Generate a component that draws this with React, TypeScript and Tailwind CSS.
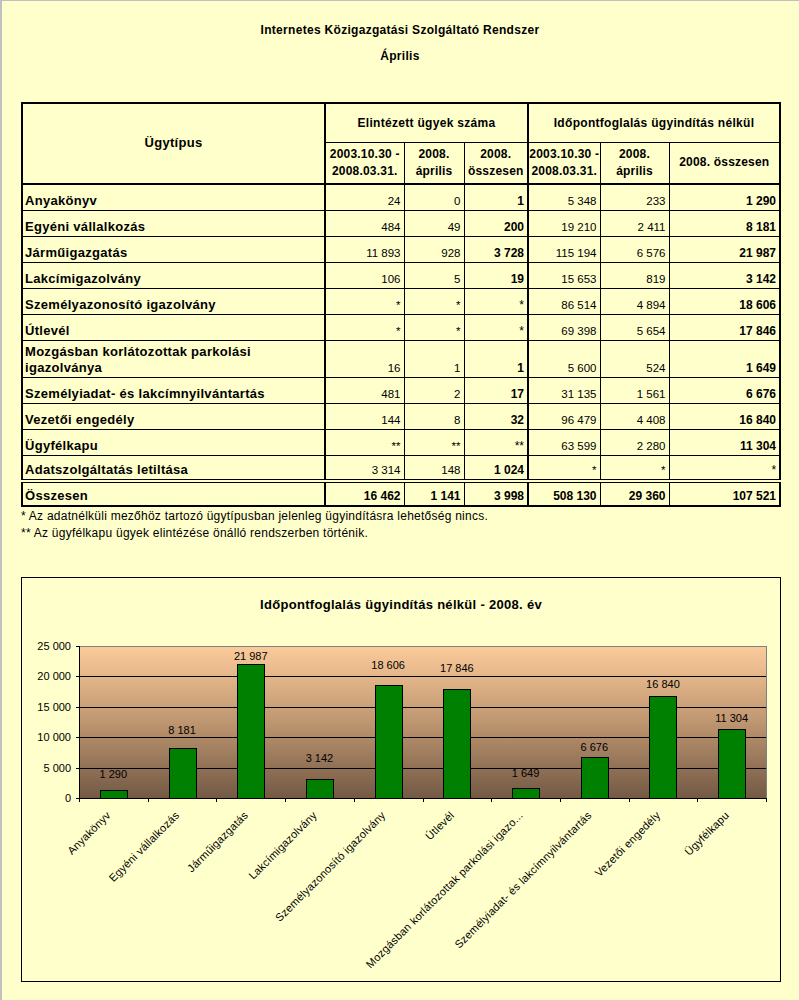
import React from "react";

type Row = {
  label: React.ReactNode;
  a: string[];
  b: string[];
  tall?: boolean;
};

const rows: Row[] = [
  { label: "Anyakönyv", a: ["24", "0", "1"], b: ["5 348", "233", "1 290"] },
  { label: "Egyéni vállalkozás", a: ["484", "49", "200"], b: ["19 210", "2 411", "8 181"] },
  { label: "Járműigazgatás", a: ["11 893", "928", "3 728"], b: ["115 194", "6 576", "21 987"] },
  { label: "Lakcímigazolvány", a: ["106", "5", "19"], b: ["15 653", "819", "3 142"] },
  { label: "Személyazonosító igazolvány", a: ["*", "*", "*"], b: ["86 514", "4 894", "18 606"] },
  { label: "Útlevél", a: ["*", "*", "*"], b: ["69 398", "5 654", "17 846"] },
  {
    label: (
      <>
        Mozgásban korlátozottak parkolási
        <br />
        igazolványa
      </>
    ),
    a: ["16", "1", "1"],
    b: ["5 600", "524", "1 649"],
    tall: true,
  },
  { label: "Személyiadat- és lakcímnyilvántartás", a: ["481", "2", "17"], b: ["31 135", "1 561", "6 676"] },
  { label: "Vezetői engedély", a: ["144", "8", "32"], b: ["96 479", "4 408", "16 840"] },
  { label: "Ügyfélkapu", a: ["**", "**", "**"], b: ["63 599", "2 280", "11 304"] },
  { label: "Adatszolgáltatás letiltása", a: ["3 314", "148", "1 024"], b: ["*", "*", "*"] },
];

const chart = [
  { name: "Anyakönyv", value: 1290, text: "1 290", ly: 774 },
  { name: "Egyéni vállalkozás", value: 8181, text: "8 181", ly: 730 },
  { name: "Járműigazgatás", value: 21987, text: "21 987", ly: 656 },
  { name: "Lakcímigazolvány", value: 3142, text: "3 142", ly: 758 },
  { name: "Személyazonosító igazolvány", value: 18606, text: "18 606", ly: 665 },
  { name: "Útlevél", value: 17846, text: "17 846", ly: 668 },
  { name: "Mozgásban korlátozottak parkolási igazo...", value: 1649, text: "1 649", ly: 773 },
  { name: "Személyiadat- és lakcímnyilvántartás", value: 6676, text: "6 676", ly: 747 },
  { name: "Vezetői engedély", value: 16840, text: "16 840", ly: 684 },
  { name: "Ügyfélkapu", value: 11304, text: "11 304", ly: 718 },
];

const num = "border-l border-black px-[3px] pb-[1px] text-right align-bottom text-[11.5px] font-normal";
const numBold = "border-l border-black px-[3px] pb-[1px] text-right align-bottom text-[12px] font-bold";
const thick = "border-l-2 border-black";

// stars keep normal weight even in the bold columns
const cellBold = (v: string) => (v.startsWith("*") ? <span className="font-normal">{v}</span> : v);

function Chart() {
  // plot area in svg coords (svg origin = page x 22, y 613)
  const L = 57;
  const R = 744;
  const T = 33;
  const B = 185;
  const cw = (R - L) / 10;
  const y = (v: number) => B - (v / 25000) * (B - T);
  const ticks = [0, 5000, 10000, 15000, 20000, 25000];

  return (
    <svg width="758" height="368" viewBox="0 0 758 368" className="block" fontFamily="'Liberation Sans', Arial, sans-serif">
      <defs>
        <linearGradient id="plotbg" x1="0" y1="0" x2="0" y2="1">
          <stop offset="0" stopColor="#FCCB9B" />
          <stop offset="0.5" stopColor="#BE9670" />
          <stop offset="1" stopColor="#735945" />
        </linearGradient>
      </defs>
      <rect x={L} y={T} width={R - L} height={B - T} fill="url(#plotbg)" />
      <g shapeRendering="crispEdges">
        <line x1={L} y1={T + 0.5} x2={R} y2={T + 0.5} stroke="#808080" />
        <line x1={R + 0.5} y1={T} x2={R + 0.5} y2={B} stroke="#808080" />
        {ticks.slice(1, 5).map((t) => (
          <line key={t} x1={L} y1={Math.round(y(t)) + 0.5} x2={R} y2={Math.round(y(t)) + 0.5} stroke="#000" />
        ))}
        {chart.map((c, i) => {
          const cx = L + cw * (i + 0.5);
          const top = Math.round(y(c.value));
          return (
            <rect key={c.name} x={Math.round(cx - 13.5) + 0.5} y={top + 0.5} width={27} height={B - top} fill="#008000" stroke="#000" />
          );
        })}
        <line x1={L + 0.5} y1={T} x2={L + 0.5} y2={B + 1} stroke="#000" />
        <line x1={L} y1={B + 0.5} x2={R + 1} y2={B + 0.5} stroke="#000" />
        {ticks.map((t) => (
          <line key={t} x1={L - 3} y1={Math.round(y(t)) + 0.5} x2={L} y2={Math.round(y(t)) + 0.5} stroke="#000" />
        ))}
        {Array.from({ length: 11 }).map((_, i) => (
          <line key={i} x1={Math.round(L + cw * i) + 0.5} y1={B} x2={Math.round(L + cw * i) + 0.5} y2={B + 4} stroke="#000" />
        ))}
      </g>
      {ticks.map((t) => (
        <text key={t} x={49} y={Math.round(y(t)) + 4} fontSize="11" textAnchor="end" fill="#000">
          {t === 0 ? "0" : t.toLocaleString("en-US").replace(",", " ")}
        </text>
      ))}
      {chart.map((c, i) => {
        const cx = L + cw * (i + 0.5);
        return (
          <text key={c.name} x={cx} y={c.ly - 613 + 4} fontSize="11" textAnchor="middle" fill="#000">
            {c.text}
          </text>
        );
      })}
      {chart.map((c, i) => {
        const cx = L + cw * (i + 0.5) - 2;
        const ly = 203;
        return (
          <text
            key={c.name}
            x={cx}
            y={ly}
            fontSize="11"
            textAnchor="end"
            fill="#000"
            letterSpacing="0.2"
            transform={`rotate(-45 ${cx} ${ly})`}
          >
            {c.name}
          </text>
        );
      })}
    </svg>
  );
}

export default function App() {
  return (
    <div className="h-[1000px] w-[799px] overflow-hidden border-l-2 border-t border-[#c0c0c0] bg-[#FFFFCC] pl-[19px] font-['Liberation_Sans',Arial,sans-serif] text-black">
      <div className="w-[758px] pt-[21px] text-center text-[12px] font-bold leading-[16px] tracking-[0.3px]">
        <div>Internetes Közigazgatási Szolgáltató Rendszer</div>
        <div className="mt-[10px]">Április</div>
      </div>

      <table className="mt-[38px] w-[758px] table-fixed border-collapse border-2 border-black">
        <colgroup>
          <col className="w-[303px]" />
          <col className="w-[79px]" />
          <col className="w-[60px]" />
          <col className="w-[64px]" />
          <col className="w-[72px]" />
          <col className="w-[69px]" />
          <col className="w-[111px]" />
        </colgroup>
        <thead>
          <tr className="h-[39px] text-[12px] font-bold tracking-[0.3px]">
            <th rowSpan={2} className="border-b-2 border-black pb-[2px] text-center align-middle text-[13px] font-bold">
              Ügytípus
            </th>
            <th colSpan={3} className={`${thick} border-b border-black text-center align-middle`}>
              Elintézett ügyek száma
            </th>
            <th colSpan={3} className={`${thick} border-b border-black text-center align-middle`}>
              Időpontfoglalás ügyindítás nélkül
            </th>
          </tr>
          <tr className="h-[42px] text-[12px] font-bold leading-[17px] tracking-[0.2px]">
            <th className={`${thick} border-b-2 border-black align-middle font-bold`}>
              2003.10.30 -<br />
              2008.03.31.
            </th>
            <th className="border-b-2 border-l border-black align-middle font-bold">
              2008.
              <br />
              április
            </th>
            <th className="border-b-2 border-l border-black align-middle font-bold">
              2008.
              <br />
              összesen
            </th>
            <th className={`${thick} border-b-2 border-black align-middle font-bold`}>
              2003.10.30 -<br />
              2008.03.31.
            </th>
            <th className="border-b-2 border-l border-black align-middle font-bold">
              2008.
              <br />
              április
            </th>
            <th className="border-b-2 border-l border-black align-middle font-bold">2008. összesen</th>
          </tr>
        </thead>
        <tbody>
          {rows.map((r, i) => (
            <tr
              key={i}
              className={`${r.tall ? "h-[37px]" : "h-[26px]"} ${i === rows.length - 1 ? "border-b-4 border-double" : "border-b"} border-black leading-[16px]`}
            >
              <td className="px-[2px] pb-[1px] align-bottom text-[13px] font-bold tracking-[0.3px]">{r.label}</td>
              <td className={`${num} border-l-2`}>{r.a[0]}</td>
              <td className={num}>{r.a[1]}</td>
              <td className={numBold}>{cellBold(r.a[2])}</td>
              <td className={`${num} border-l-2`}>{r.b[0]}</td>
              <td className={num}>{r.b[1]}</td>
              <td className={numBold}>{cellBold(r.b[2])}</td>
            </tr>
          ))}
          <tr className="h-[25px] leading-[16px]">
            <td className="px-[2px] pb-[1px] align-bottom text-[13px] font-bold tracking-[0.3px]">Összesen</td>
            <td className={`${numBold} border-l-2`}>16 462</td>
            <td className={numBold}>1 141</td>
            <td className={numBold}>3 998</td>
            <td className={`${numBold} border-l-2`}>508 130</td>
            <td className={numBold}>29 360</td>
            <td className={numBold}>107 521</td>
          </tr>
        </tbody>
      </table>

      <div className="pt-[1px] text-[12px] leading-[17px] tracking-[0.25px]">
        <p>* Az adatnélküli mezőhöz tartozó ügytípusban jelenleg ügyindításra lehetőség nincs.</p>
        <p>** Az ügyfélkapu ügyek elintézése önálló rendszerben történik.</p>
      </div>

      <div className="mt-[35px] h-[405px] w-[760px] border border-black">
        <div className="pt-[19px] text-center text-[13px] font-bold leading-[16px] tracking-[0.3px]">
          Időpontfoglalás ügyindítás nélkül - 2008. év
        </div>
        <Chart />
      </div>
    </div>
  );
}
